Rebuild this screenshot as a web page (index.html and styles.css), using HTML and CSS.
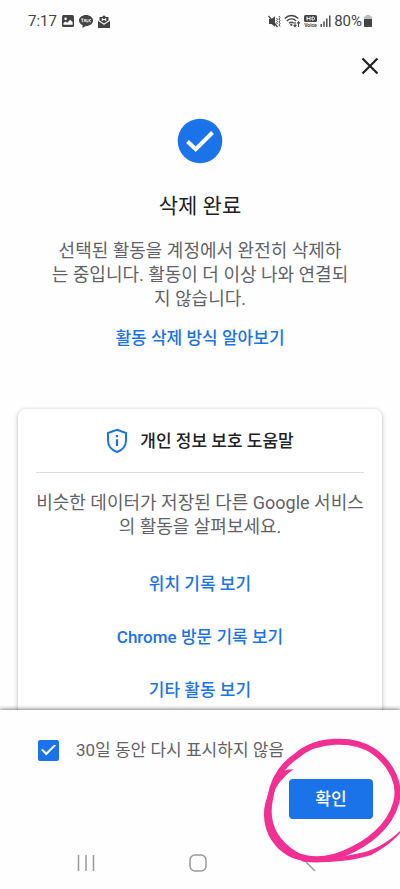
FILE: index.html
```html
<!DOCTYPE html>
<html lang="ko">
<head>
<meta charset="utf-8">
<meta name="viewport" content="width=device-width, initial-scale=1">
<title>삭제 완료</title>
<link rel="stylesheet" href="styles.css">
</head>
<body>
<div class="app">
  <header class="status">
    <div class="status-group">
      <span class="clock">7:17</span>
      <svg width="12" height="12" viewBox="0 0 12 12"><rect width="12" height="12" rx="1.5" fill="#444"/><circle cx="3.6" cy="3.8" r="1.3" fill="#fff"/><path d="M1.5 9.8V8l2-1.6 1.7 1.3 3-3 2.4 2.4v2.7z" fill="#fff"/></svg>
      <svg width="14" height="13" viewBox="0 0 14 13"><path d="M7 0c3.9 0 7 2.4 7 5.500S10.900 11 7 11L3.300 13l.4-2.700C1.500 9.400 0 7.600 0 5.500 0 2.400 3.100 0 7 0z" fill="#444"/><path d="M2 4h2.600M3.300 4v3.200M4.900 7.200 6 4l1.100 3.200M7.900 4v3h1.300M10 4v3.200M12 4l-1.800 1.600L12 7.200" fill="none" stroke="#fff" stroke-width=".8"/></svg>
      <svg width="12" height="13" viewBox="0 0 12 13"><path d="M0 5.500 6 9.500l6-4V13H0z" fill="#444"/><path d="M1.500 5.500V2H4L6 .3 8 2h2.500v3.500L6 8.600z" fill="#444"/><path d="M4.300 3v3M7.700 3v3M4.300 4.500h3.400" fill="none" stroke="#fff"/><path d="m0 5.500 6 4 6-4" fill="none" stroke="#fff" stroke-width=".6"/></svg>
    </div>
    <div class="status-group status-right">
      <svg width="13" height="13" viewBox="0 0 13 13" fill="none" stroke="#444"><path d="M1 4h2.500L7 1.300v10.400L3.500 9H1z" fill="#444" stroke="none"/><path d="m.5 1 9 11" stroke-width="1.300"/><path d="m8.500 3 1 1.200-1 1.200 1 1.200-1 1.200 1 1.200M11 1l1 1.500L11 4l1 1.500L11 7l1 1.500-1 1.500 1 1.500" stroke-width="1"/></svg>
      <svg width="17" height="14" viewBox="0 0 17 14" fill="none" stroke="#444" stroke-width="1.300"><path d="M.7 4.500c4-4 9.600-4 13.600 0M2.800 7c2.800-2.800 6.600-2.800 9.400 0M5 9.300c1.500-1.400 3.300-1.400 4.700 0"/><circle cx="7.300" cy="10.700" r=".5" fill="#444"/><path d="M11 8v4.500M9.500 11l1.500 1.700 1.500-1.700M14.500 13V8M13 9.500l1.500-1.700L16 9.500" stroke-width="1.100"/></svg>
      <svg class="voice" width="13" height="13" viewBox="0 0 13 13"><rect width="13" height="7" rx="1.500" fill="#444"/><path d="M3 1.500v4M3 3.500h3M6 1.500v4M8 2h1.300c1.600 0 1.600 3 0 3H8z" fill="none" stroke="#fff"/><text x="6.500" y="12">Voice</text></svg>
      <svg width="11" height="12" viewBox="0 0 11 12" fill="none" stroke="#444" stroke-width="1.400"><path d="M1.200 12V9M4 12V6.500M6.800 12V3.500M9.800 12V.5"/></svg>
      <span class="charge">80%<svg width="8" height="12" viewBox="0 0 8 12"><path d="M2 0h4v1.300h1Q8 1.300 8 2.300V5H0V2.300q0-1 1-1h1z" fill="#bbb"/><path d="M0 4h8v7q0 1-1 1H1q-1 0-1-1z" fill="#444"/></svg></span>
    </div>
  </header>

  <main class="content">
    <div class="toolbar">
      <button class="close" type="button" aria-label="닫기"><svg width="18" height="18" viewBox="0 0 18 18"><path d="m1.500 1.500 15 15m0-15-15 15" fill="none" stroke="#202124" stroke-width="2.200"/></svg></button>
    </div>
    <section class="result">
      <svg width="46" height="46" viewBox="0 0 46 46"><circle cx="23" cy="23" r="22.300" fill="#1a73e8"/><path d="m10.500 23.500 8.200 7.700L35.500 14.500" fill="none" stroke="#fff" stroke-width="4"/></svg>
      <h1>삭제 완료</h1>
      <p>선택된 활동을 계정에서 완전히 삭제하<br>는 중입니다. 활동이 더 이상 나와 연결되<br>지 않습니다.</p>
      <a href="#how">활동 삭제 방식 알아보기</a>
    </section>
    <section class="card">
      <h2><svg width="22" height="26" viewBox="0 0 22 26"><path d="M11 1.800 20 5v7.500c0 5.300-3.700 9.700-9 11.500-5.300-1.800-9-6.200-9-11.500V5z" fill="none" stroke="#1a73e8" stroke-width="2"/><path d="M11 7v2.300M11 11.300v6.700" stroke="#1a73e8" stroke-width="2.200"/></svg>개인 정보 보호 도움말</h2>
      <p>비슷한 데이터가 저장된 다른 Google 서비스<br>의 활동을 살펴보세요.</p>
      <nav class="links">
        <a href="#location">위치 기록 보기</a>
        <a href="#chrome">Chrome 방문 기록 보기</a>
        <a href="#other">기타 활동 보기</a>
      </nav>
    </section>
  </main>

  <footer class="sheet">
    <label class="option"><input type="checkbox" checked><span>30일 동안 다시 표시하지 않음</span></label>
    <div class="actions"><button class="confirm" type="button">확인</button></div>
    <nav class="system">
      <button type="button" aria-label="최근 앱"><svg width="18" height="18" viewBox="0 0 18 18"><path d="M1.500 1v16M9 1v16M16.500 1v16" stroke="#999" stroke-width="1.500"/></svg></button>
      <button type="button" aria-label="홈"><svg width="18" height="18" viewBox="0 0 18 18"><rect x="1" y="1" width="16" height="16" rx="5" fill="none" stroke="#999" stroke-width="1.500"/></svg></button>
      <button type="button" aria-label="뒤로"><svg width="18" height="18" viewBox="0 0 18 18"><path d="m5 8 9 9" fill="none" stroke="#999" stroke-width="1.500"/></svg></button>
    </nav>
    <svg class="marker" width="150" height="179" viewBox="0 45 450 537">
      <g fill="none" stroke="#f22f92" stroke-linecap="round">
        <path d="M140 182C200 130 310 128 370 168C427 210 454 270 438 325C418 395 355 445 285 474C230 498 172 498 135 478C72 438 44 380 61 307C71 248 99 209 140 182" stroke-width="18"/>
        <path d="M78 270C42 315 38 370 59 417C79 456 115 489 165 494" stroke-width="9"/>
        <path d="M160 493C230 500 320 487 362 473" stroke-width="14"/>
      </g>
      <path d="M85 238C97 228 113 222 131 223C113 234 92 257 77 278ZM355 468C390 455 425 433 450 408V414C430 438 398 463 360 481Z" fill="#f22f92"/>
    </svg>
  </footer>
</div>
</body>
</html>
```
FILE: styles.css
```css
* { box-sizing: border-box; }

body {
  margin: 0;
  background: #fefefe;
  color: #5f6368;
  font: 17px/24px Roboto, "Noto Sans CJK KR", sans-serif;
}

h1, h2, p { margin: 0; font-weight: 400; }
a { color: #1a73e8; font-weight: 500; text-decoration: none; }
button { border: 0; padding: 0; background: none; font: inherit; }
svg { display: block; flex: none; }

.app { display: flex; flex-direction: column; height: 100vh; }

.status {
  display: flex;
  justify-content: space-between;
  align-items: center;
  height: 42px;
  padding: 0 28px;
  color: #444;
  font-size: 15px;
}
.status-group { display: flex; align-items: center; gap: 5px; }
.status-right { gap: 3px; }
.charge { display: flex; align-items: center; gap: 2px; }
.voice text {
  fill: #444;
  font: 700 5px Roboto, sans-serif;
  text-anchor: middle;
}

.content { flex: 1; min-height: 0; overflow-y: auto; scrollbar-width: none; }

.toolbar { display: flex; justify-content: flex-end; padding: 12px 18px; }
.close { display: grid; place-items: center; width: 24px; height: 24px; }

.result {
  display: flex;
  flex-direction: column;
  align-items: center;
  padding-top: 28px;
  text-align: center;
}
.result h1 { margin: 26px 0 17px; color: #202124; font-size: 21px; line-height: 32px; }
.result p { margin-bottom: 15px; }
p { font-size: 18px; }

.card {
  margin: 59px 18px 0;
  padding: 0 18px 24px;
  border-radius: 8px;
  background: #fff;
  box-shadow: 0 1px 4px rgba(60, 64, 67, .4);
  text-align: center;
}
.card h2 {
  display: flex;
  justify-content: center;
  align-items: center;
  gap: 12px;
  height: 64px;
  border-bottom: 1px solid #dadce0;
  color: #202124;
  font-size: 17px;
  font-weight: 500;
}
.card p { margin: 18px 0 33px; white-space: nowrap; }
.links { display: flex; flex-direction: column; align-items: center; gap: 29px; }

.sheet {
  position: relative;
  background: #fefefe;
  box-shadow: 0 -1px 4px rgba(0, 0, 0, .5);
}
.option { display: flex; align-items: center; gap: 17px; padding: 28px 38px 0; }
.option input {
  display: grid;
  place-items: center;
  appearance: none;
  width: 21px;
  height: 21px;
  margin: 0;
  border: 2px solid #5f6368;
  border-radius: 2px;
}
.option input:checked { border-color: #1a73e8; background: #1a73e8; }
.option input:checked::before {
  content: "";
  width: 15px;
  height: 11px;
  background: #fff;
  clip-path: polygon(0 50%, 10% 38%, 35% 70%, 90% 0, 100% 10%, 35% 100%);
}
.actions { display: flex; justify-content: flex-end; padding: 17px 27px 0; }
.confirm {
  width: 84px;
  height: 40px;
  border-radius: 4px;
  background: #1a73e8;
  color: #fff;
  font-weight: 500;
}
.system { display: flex; justify-content: space-between; padding: 35px 81px 17px 77px; }
.marker { position: absolute; top: 0; right: 0; pointer-events: none; }
```
